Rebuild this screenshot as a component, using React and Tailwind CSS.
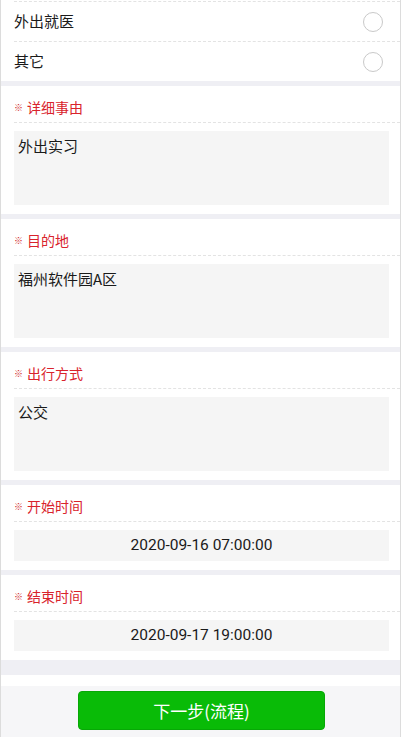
import React from "react";

const cjk = { fontFamily: '"Noto Sans CJK SC", "Noto Sans", sans-serif' };
const num = { fontFamily: 'Roboto, "Noto Sans CJK SC", sans-serif' };

function RadioRow({ label }) {
  return (
    <div className="ml-[13px] border-t border-dashed border-[#e3e3e3] h-[40px] flex items-center justify-between pr-[17px]">
      <span className="text-[15px] text-[#1a1a1a]" style={cjk}>{label}</span>
      <span className="w-[20px] h-[20px] rounded-full border border-[#c9c9c9] bg-white" />
    </div>
  );
}

function Label({ text }) {
  return (
    <div className="pl-[13px] pt-[11px] pb-[4px] flex items-center leading-[21px]">
      <span className="text-[9px] font-black text-[#d01f27] w-[13px]" style={cjk}>※</span>
      <span className="text-[14px] text-[#d9232c]" style={cjk}>{text}</span>
    </div>
  );
}

function TextSection({ label, value }) {
  return (
    <div className="bg-white">
      <Label text={label} />
      <div className="ml-[13px] border-t border-dashed border-[#e3e3e3]" />
      <div className="ml-[13px] w-[375px] mt-[8px] h-[74px] bg-[#f5f5f5] px-[4px] pt-[4px] text-[15px] leading-[22px] text-[#1a1a1a]" style={cjk}>
        {value}
      </div>
      <div className="h-[9px]" />
    </div>
  );
}

function DateSection({ label, value }) {
  return (
    <div className="bg-white">
      <Label text={label} />
      <div className="ml-[13px] border-t border-dashed border-[#e3e3e3]" />
      <div className="ml-[13px] w-[375px] mt-[8px] h-[31px] bg-[#f5f5f5] flex items-center justify-center text-[15.5px] text-[#1a1a1a]" style={num}>
        {value}
      </div>
      <div className="h-[9px]" />
    </div>
  );
}

function Gap() {
  return <div className="h-[5px] bg-[#efeff4]" />;
}

export default function App() {
  return (
    <div className="w-[403px] h-[737px] bg-white overflow-hidden">
      <div className="w-[401px] h-[737px] border-x border-[#dcdcdc] flex flex-col">
        <div className="h-px bg-white" />
        <RadioRow label="外出就医" />
        <RadioRow label="其它" />
        <Gap />
        <TextSection label="详细事由" value="外出实习" />
        <Gap />
        <TextSection label="目的地" value="福州软件园A区" />
        <Gap />
        <TextSection label="出行方式" value="公交" />
        <Gap />
        <DateSection label="开始时间" value="2020-09-16 07:00:00" />
        <Gap />
        <DateSection label="结束时间" value="2020-09-17 19:00:00" />
        <div className="h-[15px] bg-[#efeff4]" />
        <div className="h-[11px] bg-white" />
        <div className="flex-1 bg-[#f6f6f8] pt-[5px] pl-[77px]">
          <button className="w-[247px] h-[39px] rounded-[4px] bg-[#09bb07] border border-[#07a806] text-white text-[17px] flex items-center justify-center" style={cjk}>
            下一步(流程)
          </button>
        </div>
      </div>
    </div>
  );
}
